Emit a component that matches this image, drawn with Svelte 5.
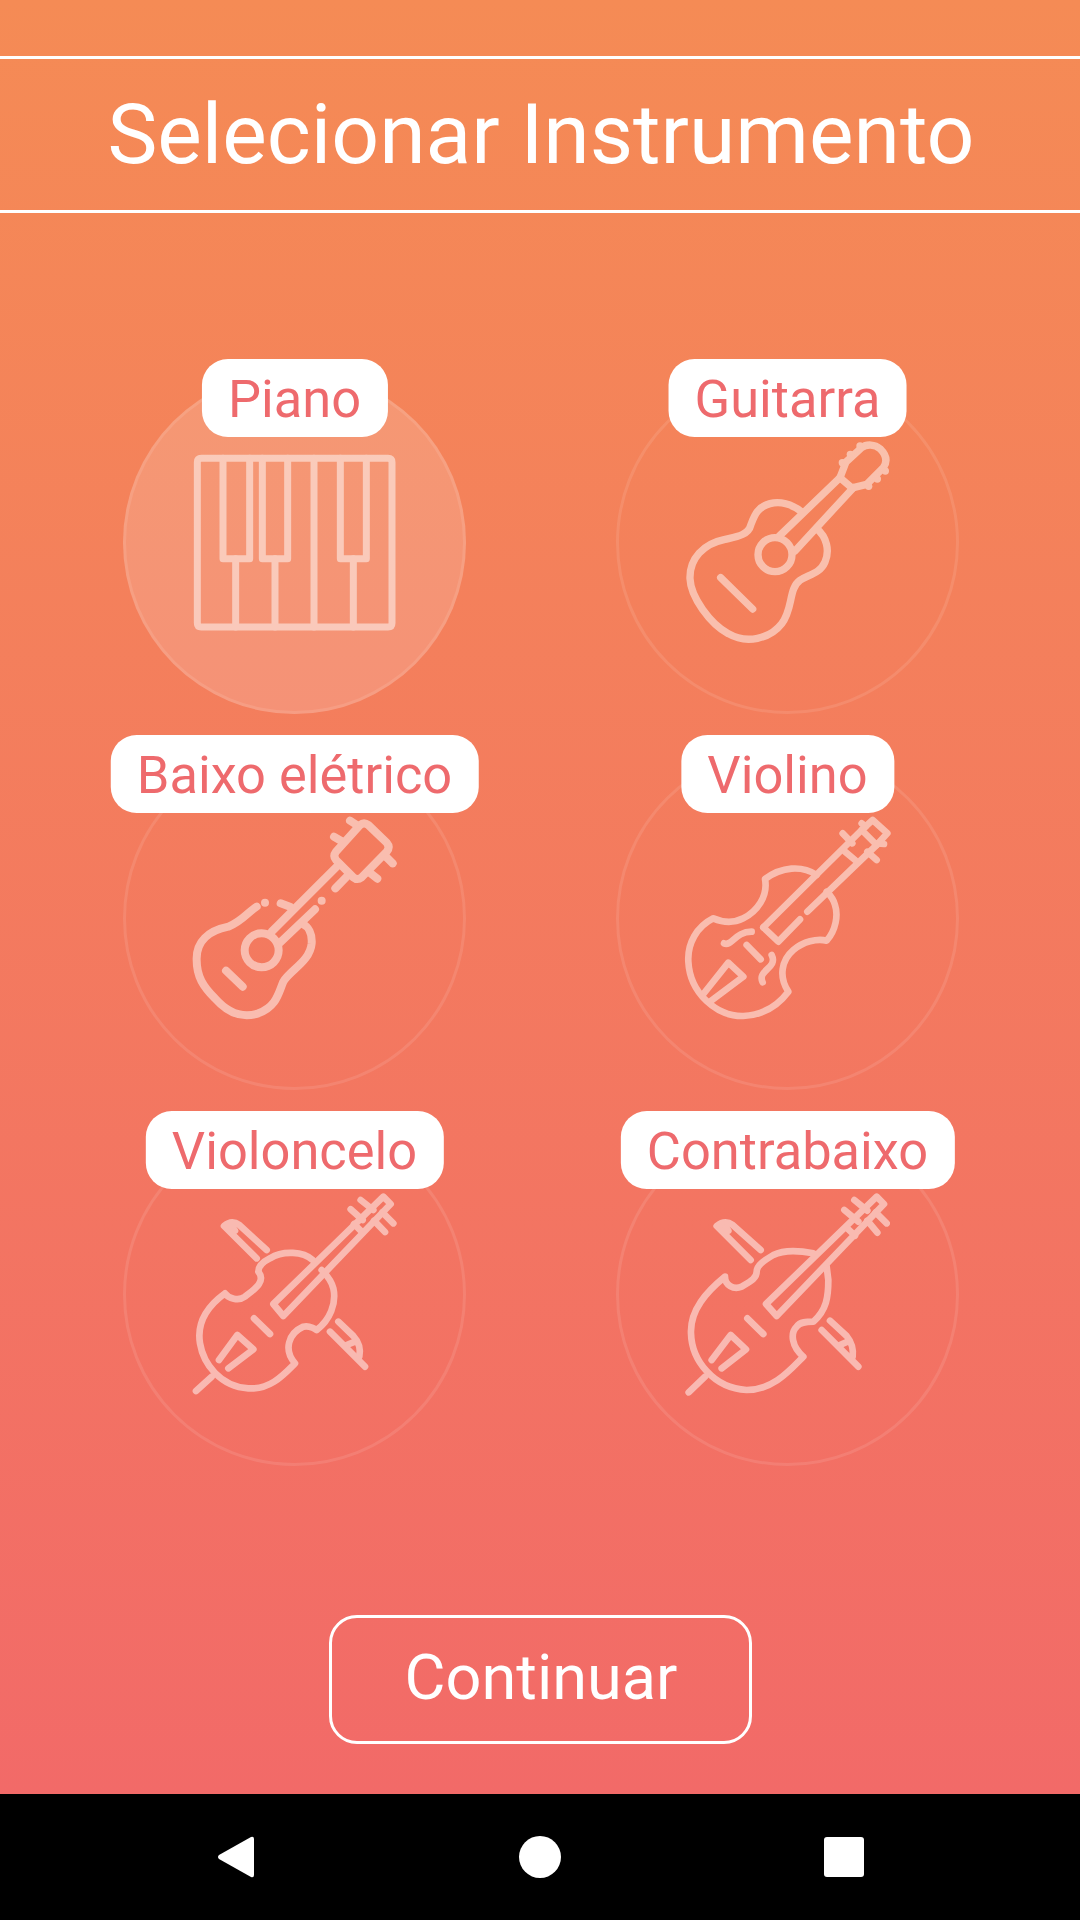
<script>
  const items = [
    { name: 'Piano', on: true, vb: '72 95 1023 1023', sw: 21, d: [
      'M304 354H864Q876 354 876 366V848Q876 860 864 860H304Q292 860 292 848V366Q292 354 304 354Z',
      'M369 354V655H449V354', 'M487 354V655H563V354', 'M721 354V655H799V354',
      'M407 655V860', 'M525 655V860', 'M642 354V860', 'M760 655V860'
    ]},
    { name: 'Guitarra', vb: '51 95 1023 1023', sw: 22, d: [
      'M603 513C575 492 540 482 510 490C470 500 462 530 452 555C445 585 405 590 375 597C310 610 268 655 270 715C272 770 330 850 385 880C440 912 510 895 545 850C580 805 565 745 600 720C625 703 660 700 675 665C690 630 680 590 650 565',
      'M525 592A51 51 0 1 0 525 694A51 51 0 1 0 525 592Z',
      'M538 587L720 412', 'M585 632L760 442', 'M720 412L757 444',
      'M720 412L738 365L785 322C800 310 825 312 840 325C860 345 862 365 850 382L800 432L760 442',
      'M727 367h.01', 'M751 342h.01', 'M780 317h.01', 'M856 392h.01', 'M832 416h.01', 'M806 438h.01',
      'M362 712L458 806'
    ]},
    { name: 'Baixo elétrico', vb: '72 84 1023 1023', sw: 24, d: [
      'M470 560C445 575 425 605 385 620C325 632 288 665 290 720C290 770 310 800 345 835C385 880 430 895 475 880C530 860 535 820 550 785C570 750 630 725 635 670C637 640 625 620 608 612',
      'M485 640A51 51 0 1 0 485 742A51 51 0 1 0 485 640Z',
      'M515 635L718 432', 'M540 668L645 568', 'M706 505L745 465', 'M542 550L570 560',
      'M708 395L780 315Q792 305 805 315L860 368Q872 382 860 395L785 472Q772 482 760 472L708 420Q698 408 708 395Z',
      'M750 302L775 318', 'M702 350L728 365', 'M860 412L878 430', 'M812 460L832 476',
      'M495 548h.01', 'M665 542h.01', 'M378 752L428 800'
    ]},
    { name: 'Violino', vb: '51 84 1023 1023', sw: 20, d: [
      'M650 465C605 435 545 440 495 477C505 530 470 575 430 595C400 610 370 608 340 595C290 620 262 670 265 725C270 820 350 890 430 888C490 885 535 855 565 815C535 770 545 720 580 690C610 665 650 655 680 662C708 630 715 585 705 555C700 535 690 525 680 515',
      'M490 622L535 665L600 598', 'M490 622L785 330', 'M622 575L830 375',
      'M735 395L765 420', 'M728 340L757 370', 'M802 395L830 420',
      'M818 300L862 340L830 375L785 330Z', 'M785 310L797 320', 'M835 370L852 372',
      'M310 822L385 728L430 770L330 845', 'M372 670C395 680 405 635 455 635', 'M488 787C470 750 535 745 515 705', 'M440 675L482 718'
    ]},
    { name: 'Violoncelo', vb: '12 72 1023 1023', sw: 20, d: [
      'M578 480C550 455 490 450 450 475C430 485 415 500 415 515C440 545 400 570 375 590C355 605 325 595 315 580C260 620 230 670 240 730C250 790 300 860 385 865C450 870 490 825 525 790C490 750 505 700 550 680C570 675 590 690 590 690C630 660 650 610 640 565C635 545 620 525 605 510',
      'M460 612L490 648L812 312L790 290Z', 'M702 372L725 395',
      'M692 328L728 360', 'M722 300L760 330', 'M762 362L795 396', 'M787 337L820 370',
      'M402 655L450 702', 'M297 780L352 705L400 748L325 805', 'M228 873L275 830',
      'M410 475L312 378Q335 358 358 375L440 450', 'M345 392L335 378',
      'M630 695L735 800', 'M655 665L700 708Q725 735 718 770', 'M680 735L705 725'
    ]},
    { name: 'Contrabaixo', vb: '21 72 1023 1023', sw: 20, d: [
      'M610 460C570 452 520 450 490 465C465 480 440 495 440 515C440 535 420 545 395 560C370 570 345 555 345 530C290 575 240 630 243 700C245 780 310 865 410 870C490 870 540 810 580 770C545 740 540 700 560 680C570 665 590 665 610 665C650 630 655 590 655 540L650 500',
      'M468 612L500 648L822 312L800 290Z', 'M712 385L735 407',
      'M703 330L745 365', 'M733 300L772 332', 'M772 362L802 398', 'M797 337L830 370',
      'M412 655L460 702', 'M305 780L362 705L408 748L335 805', 'M236 877L285 830',
      'M422 480L320 378Q345 358 368 375L452 450', 'M355 392L345 378',
      'M635 690L745 800', 'M660 662L710 708Q732 735 728 770', 'M690 735L712 725'
    ]}
  ];
</script>

<div class="app">
  <main class="screen">
    <header class="title"><h1>Selecionar Instrumento</h1></header>
    <section class="grid">
      {#each items as it}
        <div class="cell">
          <span class="label">{it.name}</span>
          <div class="circle" class:on={it.on}>
            <svg viewBox={it.vb} stroke-width={it.sw} aria-hidden="true">
              {#each it.d as p}<path d={p} />{/each}
            </svg>
          </div>
        </div>
      {/each}
    </section>
    <button class="go"><span>Continuar</span></button>
  </main>
  <nav class="nav">
    <svg class="n-back" viewBox="0 0 37 42"><path d="M34 1L2 19Q0 21 2 23L34 41Q37 42 37 39V3Q37 0 34 1Z" /></svg>
    <span class="n-home"></span>
    <span class="n-rec"></span>
  </nav>
</div>

<style>
  :global(body) { margin: 0; }
  .app {
    width: 1080px;
    height: 1920px;
    display: flex;
    flex-direction: column;
    font-family: Roboto, sans-serif;
  }
  .screen {
    flex: 1;
    display: flex;
    flex-direction: column;
    align-items: center;
    padding-top: 56px;
    box-sizing: border-box;
    background: linear-gradient(180deg, #f58b55 0%, #f26a68 100%);
  }
  .title {
    width: 100%;
    height: 157px;
    box-sizing: border-box;
    padding-left: 2px;
    border-top: 3px solid #fff;
    border-bottom: 3px solid #fff;
    display: flex;
    align-items: center;
    justify-content: center;
  }
  h1 {
    margin: 0;
    font-size: 84px;
    font-weight: 400;
    color: #fff;
    line-height: 1;
  }
  .grid {
    margin-top: 146px;
    margin-left: 2px;
    display: grid;
    grid-template-columns: 343px 343px;
    column-gap: 150px;
    row-gap: 21px;
  }
  .cell {
    position: relative;
    padding-top: 12px;
  }
  .label {
    position: absolute;
    top: 0;
    left: 50%;
    transform: translateX(-50%);
    z-index: 1;
    height: 78px;
    line-height: 80px;
    padding: 0 26.500px;
    background: #fff;
    border-radius: 26px;
    color: #ee6a6d;
    font-size: 52.400px;
    white-space: nowrap;
  }
  .circle {
    width: 343px;
    height: 343px;
    box-sizing: border-box;
    border-radius: 50%;
    border: 3px solid rgba(255, 255, 255, 0.1);
    position: relative;
  }
  .circle.on {
    background: rgba(255, 255, 255, 0.16);
    border-color: rgba(255, 255, 255, 0.1);
  }
  .circle svg {
    position: absolute;
    top: -2px;
    left: -2px;
    width: 341px;
    height: 341px;
    fill: none;
    stroke: #fff;
    stroke-linecap: round;
    stroke-linejoin: round;
    opacity: 0.5;
  }
  .go {
    margin-top: 149px;
    width: 423px;
    height: 129px;
    box-sizing: border-box;
    border: 3px solid #fff;
    border-radius: 28px;
    background: transparent;
    color: #fff;
    font-family: inherit;
    font-size: 63px;
    padding: 0 0 5px 2px;
  }
  .nav {
    height: 126px;
    flex: none;
    background: #000;
    position: relative;
  }
  .n-back {
    position: absolute;
    left: 217px;
    top: 42px;
    width: 37px;
    height: 42px;
    fill: #fff;
  }
  .n-home {
    position: absolute;
    left: 519px;
    top: 42px;
    width: 42px;
    height: 42px;
    border-radius: 50%;
    background: #fff;
  }
  .n-rec {
    position: absolute;
    left: 824px;
    top: 43px;
    width: 40px;
    height: 40px;
    border-radius: 3px;
    background: #fff;
  }
</style>
